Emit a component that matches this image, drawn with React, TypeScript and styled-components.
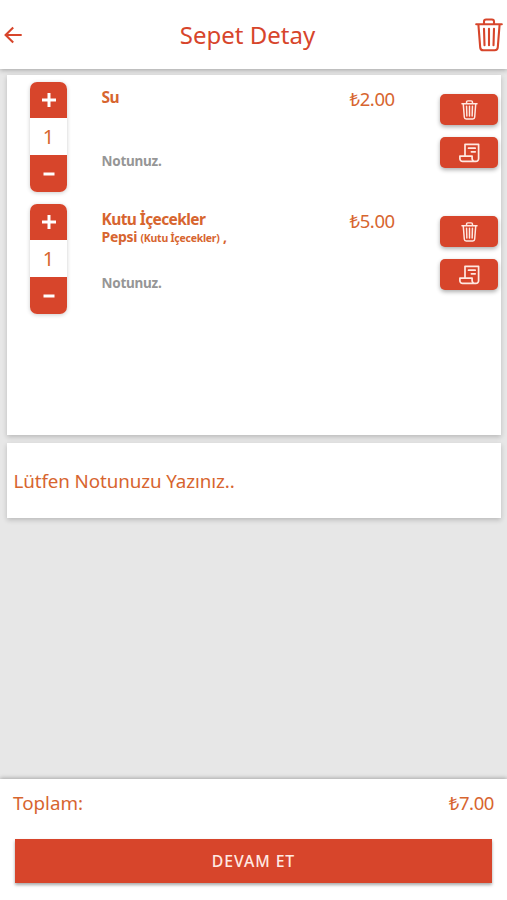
import React from "react";
import styled, { createGlobalStyle } from "styled-components";

const RED = "#d7452b";
const ORANGE = "#d7652f";

const Global = createGlobalStyle`
  * { box-sizing: border-box; }
  body { margin: 0; background: #e7e7e7; }
  button { font: inherit; border: 0; padding: 0; cursor: pointer; }
`;

const Screen = styled.div`
  width: 100%;
  height: 900px;
  display: flex;
  flex-direction: column;
  overflow: hidden;
  background: #e7e7e7;
  color: ${ORANGE};
  font-family: "Noto Sans", "Open Sans", sans-serif;
`;

const Header = styled.header`
  flex: none;
  height: 69px;
  display: grid;
  grid-template-columns: 40px 1fr 40px;
  align-items: center;
  background: #fff;
  color: ${RED};
  box-shadow: 0 1px 5px rgba(0, 0, 0, 0.3);
`;

const IconButton = styled.button<{ $end?: boolean }>`
  display: flex;
  height: 36px;
  align-items: center;
  justify-content: ${(p) => (p.$end ? "flex-end" : "flex-start")};
  padding: ${(p) => (p.$end ? "1px 4px 0 0" : "1px 0 0 3px")};
  background: none;
  color: inherit;
`;

const Title = styled.h1`
  margin: 1px 0 0;
  padding-right: 12px;
  text-align: center;
  font-size: 24px;
  line-height: 34px;
  font-weight: 400;
`;

const Content = styled.main`
  flex: 1;
  display: flex;
  flex-direction: column;
  gap: 8px;
  padding: 6px 6px 0 7px;
`;

const Card = styled.section<{ $height: number }>`
  height: ${(p) => p.$height}px;
  background: #fff;
  box-shadow: 0 2px 5px rgba(0, 0, 0, 0.2);
`;

const Row = styled.article`
  height: 122px;
  display: grid;
  grid-template-columns: 37px 248px 125px 58px;
  padding: 7px 0 0 23px;
`;

const Stepper = styled.div`
  height: 110px;
  display: grid;
  grid-template-rows: 36px 1fr 37px;
  overflow: hidden;
  border-radius: 7px;
  background: #fff;
  box-shadow: 0 1px 4px rgba(0, 0, 0, 0.2);
`;

const StepButton = styled.button`
  display: flex;
  align-items: center;
  justify-content: center;
  background: ${RED};
  color: #fff;
`;

const Quantity = styled.span`
  text-align: center;
  font-size: 20px;
  line-height: 37px;
`;

const Details = styled.div`
  display: flex;
  flex-direction: column;
  padding-left: 34.5px;
  font-weight: 700;
`;

const Names = styled.div`
  height: 69px;
  padding-top: 6px;
`;

const ProductName = styled.div`
  font-size: 15.5px;
  line-height: 18px;
  letter-spacing: -0.6px;
`;

const Option = styled.div`
  font-size: 14px;
  line-height: 18px;
  letter-spacing: -0.3px;
`;

const OptionGroup = styled.span`
  font-size: 10.5px;
  letter-spacing: -0.25px;
`;

const Note = styled.div`
  color: #969696;
  font-size: 13.5px;
  line-height: 20px;
  letter-spacing: -0.25px;
`;

const Price = styled.span`
  font-size: 18.5px;
  line-height: 24px;
  letter-spacing: -0.4px;
`;

const RowPrice = styled(Price)`
  padding: 5px 0 0 34.5px;
`;

const Actions = styled.div`
  display: flex;
  flex-direction: column;
  gap: 12px;
  padding-top: 12px;
`;

const ActionButton = styled.button`
  height: 31px;
  display: flex;
  align-items: center;
  justify-content: center;
  border-radius: 5px;
  background: ${RED};
  color: #ffe9e2;
  box-shadow: 0 2px 4px rgba(0, 0, 0, 0.32);
`;

const OrderNote = styled.div`
  padding-left: 6.5px;
  font-size: 18.8px;
  line-height: 76px;
  letter-spacing: -0.1px;
`;

const Footer = styled.footer`
  flex: none;
  height: 121px;
  padding: 12px 15px 0;
  background: #fff;
  box-shadow: 0 -1px 4px rgba(0, 0, 0, 0.28);
`;

const Total = styled.div`
  height: 48px;
  display: flex;
  justify-content: space-between;
  margin: 0 -2px 0 -2px;
  font-size: 18.8px;
  line-height: 24px;
  letter-spacing: 0;
`;

const Continue = styled.button`
  width: 477px;
  height: 44px;
  display: block;
  background: ${RED};
  color: #ffe9e2;
  box-shadow: 0 2px 3px rgba(0, 0, 0, 0.35);
  && {
    font-size: 15.8px;
    font-weight: 500;
    letter-spacing: 0.9px;
  }
`;

const TrashIcon = ({ width, height, stroke }: { width: number; height: number; stroke: number }) => (
  <svg width={width} height={height} viewBox="0 0 28 34" fill="none" stroke="currentColor" strokeWidth={stroke} strokeLinecap="round" strokeLinejoin="round">
    <path d="M1.2 6.2h25.6M9 6V3.6Q9 1.5 11.1 1.5h5.8Q19 1.5 19 3.6V6M3.4 6.5l1.8 22.8q.2 3 3.2 3h11.2q3 0 3.2-3l1.8-22.8M9 10.7l.5 16.6M14 10.7v16.6M19 10.7l-.5 16.6" />
  </svg>
);

const BackIcon = () => (
  <svg width="20" height="18" viewBox="0 0 20 18" fill="none" stroke="currentColor" strokeWidth="2.1">
    <path d="M18.7 9H3M10.2 1.5L2.6 9l7.6 7.5" />
  </svg>
);

const ScrollIcon = () => (
  <svg width="21" height="20" viewBox="0 0 21 20" fill="none" stroke="currentColor" strokeWidth="1.7" strokeLinejoin="round" strokeLinecap="round">
    <path d="M6 12.6V1.3h13.6v14.4a2.7 2.7 0 0 1-2.7 2.7H3.6a2.7 2.7 0 0 1-2.7-2.7v-2.6h12.2v2.2a2.9 2.9 0 0 0 2.9 3.1" />
    <path d="M9.5 5.2h6.7M12.4 8.8h3.8" />
  </svg>
);

const SignIcon = ({ plus }: { plus?: boolean }) => (
  <svg width="14" height="14" viewBox="0 0 14 14" fill="none" stroke="currentColor" strokeWidth="3">
    <path d={plus ? "M0 7h14M7 0v14" : "M1.5 7h11"} />
  </svg>
);

interface Item {
  name: string;
  option?: string;
  group?: string;
  price: string;
}

const items: Item[] = [
  { name: "Su", price: "₺2.00" },
  { name: "Kutu İçecekler", option: "Pepsi", group: "(Kutu İçecekler)", price: "₺5.00" },
];

const CartRow = ({ item }: { item: Item }) => (
  <Row>
    <Stepper>
      <StepButton aria-label="Artır"><SignIcon plus /></StepButton>
      <Quantity>1</Quantity>
      <StepButton aria-label="Azalt"><SignIcon /></StepButton>
    </Stepper>
    <Details>
      <Names>
        <ProductName>{item.name}</ProductName>
        {item.option && (
          <Option>
            {item.option} <OptionGroup>{item.group}</OptionGroup> ,
          </Option>
        )}
      </Names>
      <Note>Notunuz.</Note>
    </Details>
    <RowPrice>{item.price}</RowPrice>
    <Actions>
      <ActionButton aria-label="Sil"><TrashIcon width={17} height={20} stroke={2.5} /></ActionButton>
      <ActionButton aria-label="Not"><ScrollIcon /></ActionButton>
    </Actions>
  </Row>
);

export default function App() {
  return (
    <Screen>
      <Global />
      <Header>
        <IconButton aria-label="Geri"><BackIcon /></IconButton>
        <Title>Sepet Detay</Title>
        <IconButton $end aria-label="Sepeti boşalt"><TrashIcon width={28} height={34} stroke={2.1} /></IconButton>
      </Header>
      <Content>
        <Card $height={360}>
          {items.map((item) => <CartRow key={item.name} item={item} />)}
        </Card>
        <Card $height={75}>
          <OrderNote>Lütfen Notunuzu Yazınız..</OrderNote>
        </Card>
      </Content>
      <Footer>
        <Total>
          <span>Toplam:</span>
          <Price>₺7.00</Price>
        </Total>
        <Continue>DEVAM ET</Continue>
      </Footer>
    </Screen>
  );
}
